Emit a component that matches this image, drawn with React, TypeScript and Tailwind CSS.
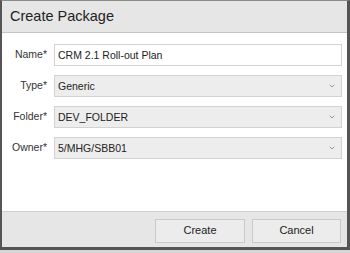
import { ChevronDown } from "lucide-react";

const FIELDS = [
  { label: "Name*", value: "CRM 2.1 Roll-out Plan", select: false },
  { label: "Type*", value: "Generic", select: true },
  { label: "Folder*", value: "DEV_FOLDER", select: true },
  { label: "Owner*", value: "5/MHG/SBB01", select: true },
];

export default function App() {
  return (
    <div
      className="w-[350px] h-[253px] bg-[#d6d6d6] flex flex-col overflow-hidden text-[#222]"
      style={{ fontFamily: '"Liberation Sans", Arial, sans-serif' }}
    >
      {/* Dialog */}
      <div className="h-[250px] flex flex-col border-l-2 border-r-[3px] border-t border-b-[3px] border-[#555] border-t-[#8a8a8a] bg-white">
        {/* Header */}
        <div className="h-[32px] shrink-0 flex items-center px-[8px] bg-[#e6e6e6] border-b border-[#c4c4c4]">
          <span className="text-[14.5px] leading-none">Create Package</span>
        </div>

        {/* Body */}
        <div className="flex-1 flex flex-col gap-[9px] pt-[11px]">
          {FIELDS.map((f) => (
            <div key={f.label} className="flex items-center h-[22px]">
              <div className="w-[46px] text-right text-[10.5px] text-[#333] pr-[1px]">{f.label}</div>
              <div
                className={
                  f.select
                    ? "ml-[6px] w-[288px] h-full flex items-center pl-[3px] pr-[5px] border border-[#d2d2d2] bg-[#ededed]"
                    : "ml-[6px] w-[288px] h-full flex items-center pl-[3px] pr-[5px] border border-[#d2d2d2] bg-white"
                }
              >
                <span className="flex-1 text-[10.5px] leading-none">{f.value}</span>
                {f.select && <ChevronDown className="w-[8px] h-[8px] text-[#888]" strokeWidth={2.5} />}
              </div>
            </div>
          ))}
        </div>

        {/* Footer */}
        <div className="h-[36px] shrink-0 flex items-center justify-end gap-[7px] pr-[6px] pt-[2px] bg-[#e6e6e6] border-t border-[#cfcfcf]">
          <button className="w-[90px] h-[24px] text-[11px] bg-[#ececec] border border-[#cacaca]">Create</button>
          <button className="w-[89px] h-[24px] text-[11px] bg-[#ececec] border border-[#cacaca]">Cancel</button>
        </div>
      </div>
    </div>
  );
}
